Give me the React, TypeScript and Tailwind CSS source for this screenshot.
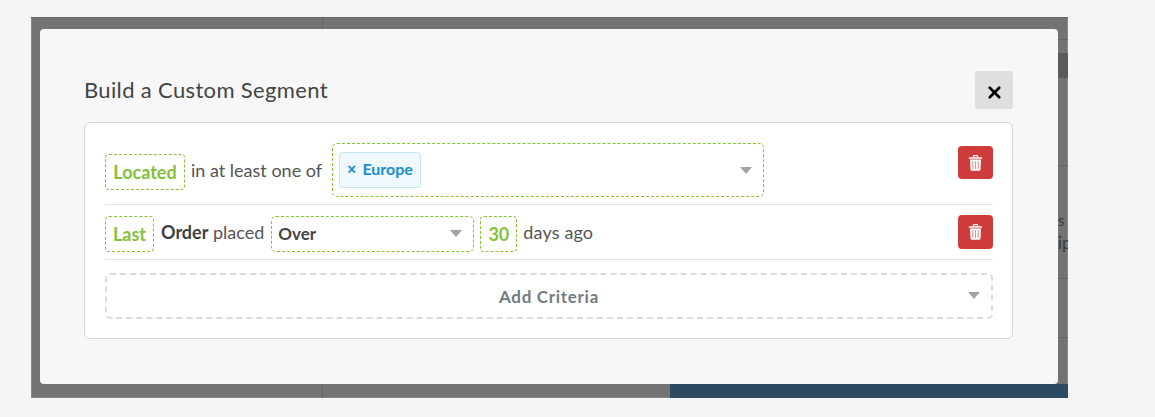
import { X } from 'lucide-react';

const font = { fontFamily: 'Lato, "Noto Sans", sans-serif' };

const Caret = () => <span className="block h-0 w-0 border-x-[6.5px] border-t-[7px] border-x-transparent border-t-[#a3a3a3]" />;

const Trash = () => (
  <svg width="15" height="16" viewBox="0 0 16 18" fill="none">
    <path d="M5.5 2.5V1.6C5.5 1 6 .7 6.500 .7h3c.5 0 1 .3 1 .9v.9" stroke="#fff" strokeWidth="1.300" />
    <rect x="0.500" y="2.400" width="15" height="1.800" rx=".6" fill="#fff" />
    <path d="M1.800 5h12.400l-.6 11.300c0 .8-.6 1.300-1.300 1.300H3.700c-.7 0-1.300-.5-1.300-1.300L1.800 5Z" fill="#fff" />
    <path d="M5 7v8.500M8 7v8.500M11 7v8.500" stroke="#e08a8a" strokeWidth="1.200" />
  </svg>
);

const DeleteButton = ({ h }: { h: string }) => (
  <button className={`ml-auto flex w-[35px] ${h} items-center justify-center rounded-[4px] bg-[#cf3b3b]`}>
    <Trash />
  </button>
);

const Pill = ({ label, w }: { label: string; w: string }) => (
  <span className={`flex h-[36px] ${w} items-center justify-center rounded-[4px] border border-dashed border-[#86c232] text-[18px] font-bold text-[#85c13b]`}>
    {label}
  </span>
);

export default function App() {
  return (
    <div className="h-[417px] w-[1155px] overflow-hidden bg-[#f4f5f7] pl-[31px] pt-[17px]" style={font}>
      {/* dimmed page behind the dialog */}
      <div className="relative h-[381px] w-[1037px] overflow-hidden bg-[#737373] pl-[9px] pt-[12px] shadow-[inset_0_1px_0_#666,inset_1px_0_0_#888,inset_-1px_0_0_#888,inset_0_-1px_0_#888]">
        <div className="absolute left-[291px] top-0 h-full w-px bg-[#666]" />
        <div className="absolute right-0 top-[22px] h-px w-[10px] bg-[#666]" />
        <div className="absolute right-0 top-[36px] h-[25px] w-[10px] bg-[#5b5b5b]" />
        <div className="absolute right-0 top-[148px] h-px w-[10px] bg-[#666]" />
        <div className="absolute right-0 top-[193px] w-[10px] text-[15px] leading-[20px] text-[#3a3a3a]">s</div>
        <div className="absolute right-0 top-[216px] w-[10px] overflow-hidden text-[17px] leading-[20px] text-[#3a3a3a]">ip</div>
        <div className="absolute right-0 top-[261px] h-px w-[10px] bg-[#666]" />
        <div className="absolute right-0 top-[320px] h-px w-[10px] bg-[#666]" />
        <div className="absolute bottom-0 right-0 h-[14px] w-[398px] bg-[#2e4a60]" />

        <div className="relative h-[355px] w-[1018px] rounded-[4px] bg-[#f7f7f8] pl-[44px] pr-[45px] pt-[42px]">
          <div className="flex items-start justify-between">
            <h2 className="pt-[3px] text-[22px] font-normal leading-[32px] tracking-[0.35px] text-[#444]">Build a Custom Segment</h2>
            <button className="flex h-[38px] w-[38px] items-center justify-center rounded-[3px] bg-[#dedfe1]">
              <X size={19} strokeWidth={3.4} className="mt-[4px] text-black" />
            </button>
          </div>

          <div className="mt-[13px] h-[217px] rounded-[6px] border border-[#d9d9d9] bg-white pl-[20px] pr-[19px] pt-[20px]">
            <div className="flex h-[62px] items-start border-b border-[#e5e5e5]">
              <div className="mt-[11px]"><Pill label="Located" w="w-[80px]" /></div>
              <span className="ml-[6px] mt-[16px] text-[18px] leading-[22px] text-[#555]">in at least one of</span>
              <div className="ml-[10px] flex h-[54px] w-[432px] items-center justify-between rounded-[5px] border border-dashed border-[#86c232] pl-[6px] pr-[11px]">
                <span className="flex h-[36px] w-[82px] items-center rounded-[3px] border border-[#c8e6f5] bg-[#eff8fd] pb-[2px] pl-[7px] text-[16px] font-bold text-[#1a8ed0]">
                  <span className="mr-[6px] text-[16px] font-black">×</span>Europe
                </span>
                <Caret />
              </div>
              <div className="ml-auto mt-[3px] flex w-[35px]"><DeleteButton h="h-[33px]" /></div>
            </div>

            <div className="flex h-[55px] items-start border-b border-[#e5e5e5] pt-[11px]">
              <Pill label="Last" w="w-[49px]" />
              <span className="ml-[7px] mt-[5px] text-[18px] leading-[22px] text-[#555]"><b className="text-[#3f3f3f]">Order</b> placed</span>
              <div className="ml-[7px] flex h-[36px] w-[203px] items-center justify-between rounded-[5px] border border-dashed border-[#86c232] pb-[1px] pl-[6px] pr-[11px]">
                <span className="text-[17px] font-bold text-[#444]">Over</span>
                <Caret />
              </div>
              <div className="ml-[6px]"><Pill label="30" w="w-[37px]" /></div>
              <span className="ml-[6px] mt-[5px] text-[18px] leading-[22px] tracking-[0.15px] text-[#555]">days ago</span>
              <div className="ml-auto -mt-[1px] flex w-[35px]"><DeleteButton h="h-[34px]" /></div>
            </div>

            <div className="relative mt-[13px] flex h-[46px] items-center justify-center rounded-[5px] border-2 border-dashed border-[#dcdcdc] pt-[1px] text-[17px] font-bold tracking-[0.7px] text-[#737b82]">
              Add Criteria
              <span className="absolute right-[11px] top-[17px]"><Caret /></span>
            </div>
          </div>
        </div>
      </div>
    </div>
  );
}
